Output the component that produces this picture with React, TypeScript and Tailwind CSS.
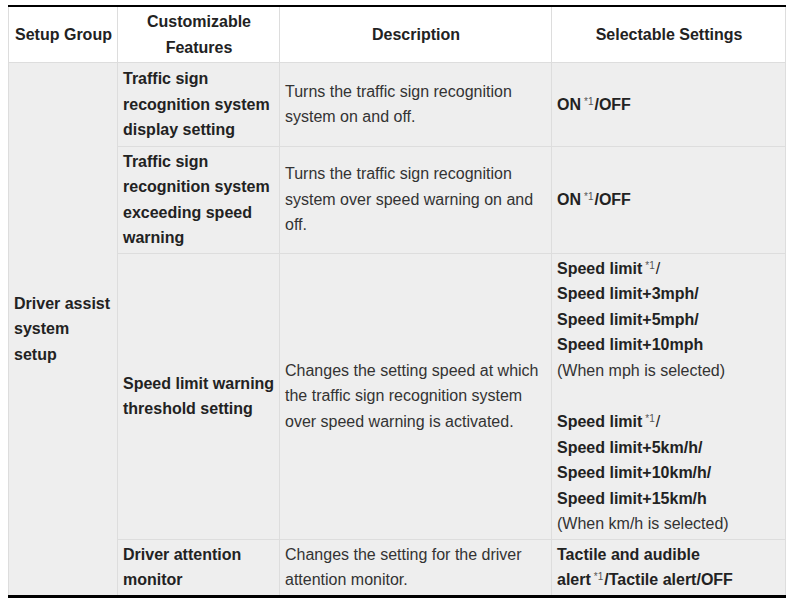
const Sup = () => (
  <sup className="ml-[3px] mr-[1px] text-[10px] font-normal text-[#555] top-[-0.5em]">*1</sup>
);

const cell = 'border border-[#dddddd] pl-[5px] align-middle';

export default function App() {
  return (
    <div className="min-h-screen bg-white pt-[5px] pl-2 font-['Liberation_Sans',Arial,sans-serif] text-[16px] leading-[25.5px] text-[#222]">
      <table className="w-[777px] table-fixed border-collapse border-t-2 border-b-[3px] border-t-black border-b-black">
        <colgroup>
          <col className="w-[109px]" />
          <col className="w-[162px]" />
          <col className="w-[272px]" />
          <col className="w-[234px]" />
        </colgroup>
        <thead>
          <tr className="bg-white font-bold text-center">
            <th className={`${cell} border-t-0 pr-[4px] py-[2px]`}>Setup Group</th>
            <th className={`${cell} border-t-0 pr-[4px] py-[2px]`}>Customizable Features</th>
            <th className={`${cell} border-t-0 pr-[4px] py-[2px]`}>Description</th>
            <th className={`${cell} border-t-0 pr-[4px] py-[2px]`}>Selectable Settings</th>
          </tr>
        </thead>
        <tbody className="bg-[#eeeeee]">
          <tr>
            <td rowSpan={4} className={`${cell} border-b-0 pr-[4px] py-[2px] font-bold`}>
              Driver assist system setup
            </td>
            <td className={`${cell} pr-[2px] py-[3px] font-bold`}>Traffic sign recognition system display setting</td>
            <td className={`${cell} pr-[4px] py-[3px] text-[#333]`}>Turns the traffic sign recognition system on and off.</td>
            <td className={`${cell} pr-[4px] py-[3px] font-bold`}>
              ON<Sup />/OFF
            </td>
          </tr>
          <tr>
            <td className={`${cell} pr-[2px] py-[2px] font-bold`}>Traffic sign recognition system exceeding speed warning</td>
            <td className={`${cell} pr-[4px] py-[2px] text-[#333]`}>
              Turns the traffic sign recognition system over speed warning on and off.
            </td>
            <td className={`${cell} pr-[4px] py-[2px] font-bold`}>
              ON<Sup />/OFF
            </td>
          </tr>
          <tr>
            <td className={`${cell} pr-[2px] py-[2px] font-bold`}>Speed limit warning threshold setting</td>
            <td className={`${cell} pr-[4px] py-[2px] text-[#333]`}>
              Changes the setting speed at which the traffic sign recognition system over speed warning is activated.
            </td>
            <td className={`${cell} pr-[4px] py-[2px]`}>
              <div className="font-bold">
                Speed limit<Sup />
                <span className="font-normal">/</span>
              </div>
              <div className="font-bold">Speed limit+3mph/</div>
              <div className="font-bold">Speed limit+5mph/</div>
              <div className="font-bold">Speed limit+10mph</div>
              <div className="text-[#333]">(When mph is selected)</div>
              <div className="h-[26px]" />
              <div className="font-bold">
                Speed limit<Sup />
                <span className="font-normal">/</span>
              </div>
              <div className="font-bold">Speed limit+5km/h/</div>
              <div className="font-bold">Speed limit+10km/h/</div>
              <div className="font-bold">Speed limit+15km/h</div>
              <div className="text-[#333]">(When km/h is selected)</div>
            </td>
          </tr>
          <tr>
            <td className={`${cell} border-b-0 pr-[2px] py-[2px] font-bold`}>Driver attention monitor</td>
            <td className={`${cell} border-b-0 pr-[4px] py-[2px] text-[#333]`}>Changes the setting for the driver attention monitor.</td>
            <td className={`${cell} border-b-0 pr-[4px] py-[2px] font-bold`}>
              Tactile and audible alert<Sup />/Tactile alert/OFF
            </td>
          </tr>
        </tbody>
      </table>
    </div>
  );
}
